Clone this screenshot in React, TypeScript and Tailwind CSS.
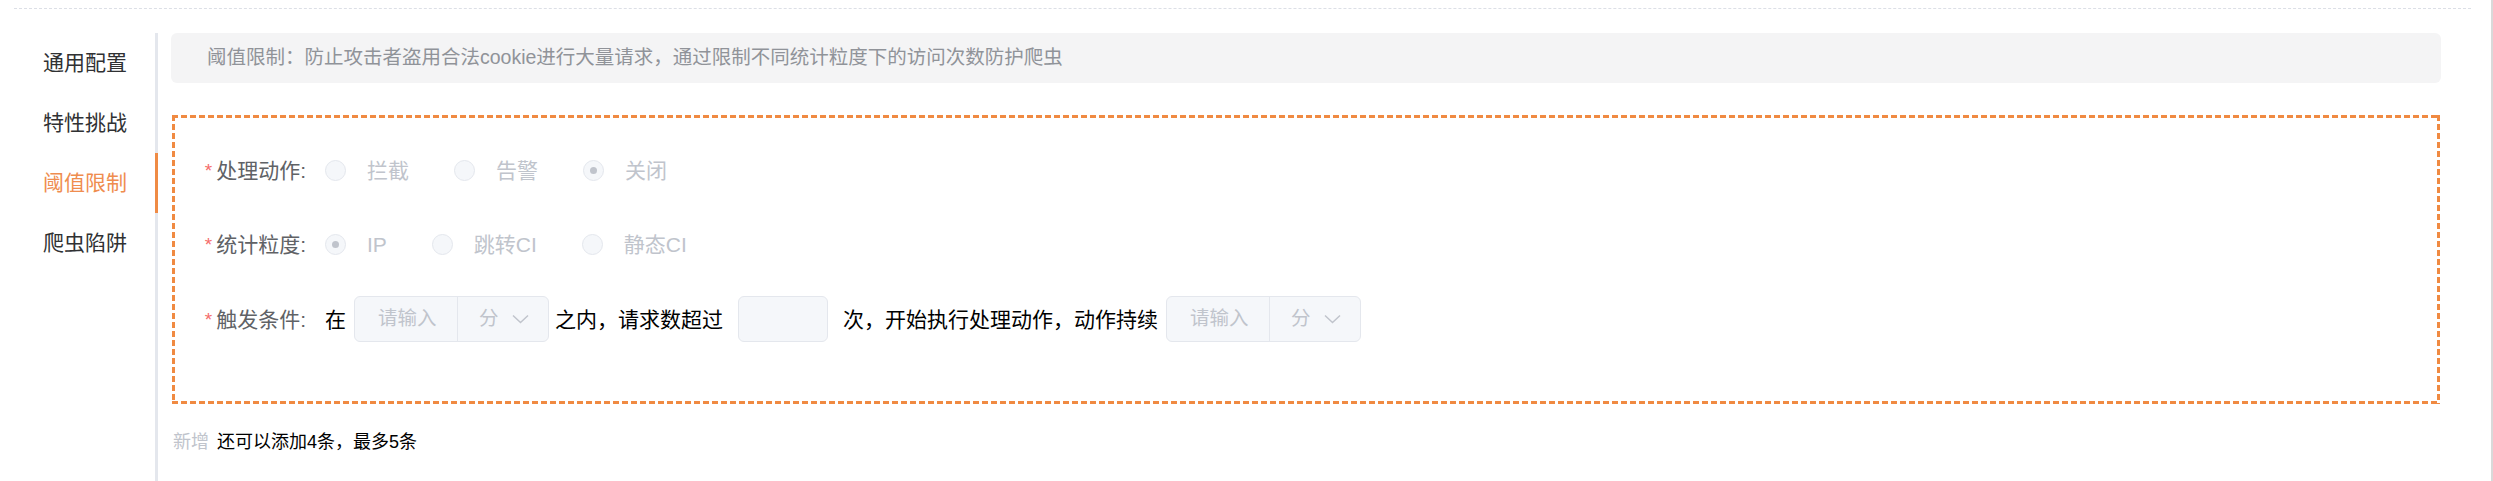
import React from "react";

const FONT = '"Liberation Sans", "Noto Sans CJK SC", sans-serif';

function Radio({ label, checked }: { label: string; checked?: boolean }) {
  return (
    <div className="flex items-center mr-[45px]">
      <div className="w-[21px] h-[21px] rounded-full border border-[#e4e7ed] bg-[#f5f7fa] flex items-center justify-center">
        {checked && <div className="w-[7px] h-[7px] rounded-full bg-[#c0c4cc]" />}
      </div>
      <span className="ml-[21px] text-[21px] leading-[21px] text-[#c0c4cc]">{label}</span>
    </div>
  );
}

function Label({ text }: { text: string }) {
  return (
    <div className="w-[150px] shrink-0 flex items-center justify-end pr-[19px] text-[21px] leading-[21px] text-[#606266]">
      <span className="text-[#f56c6c] mr-[4px] text-[19px]">*</span>
      <span>{text}</span>
    </div>
  );
}

function Chevron() {
  return (
    <svg width="17" height="10" viewBox="0 0 17 10" className="ml-[13px]">
      <path d="M1 1.5 L8.5 8.5 L16 1.5" fill="none" stroke="#c0c4cc" strokeWidth="1.5" />
    </svg>
  );
}

function InputSelect({ className = "" }: { className?: string }) {
  return (
    <div className={"flex h-[46px] w-[195px] border border-[#e4e7ed] bg-[#f5f7fa] rounded-[6px] " + className}>
      <div className="w-[103px] border-r border-[#e4e7ed] flex items-center pl-[23px] text-[19.5px] text-[#c0c4cc]">
        请输入
      </div>
      <div className="flex-1 flex items-center pl-[21px] text-[19.5px] text-[#c0c4cc]">
        分
        <Chevron />
      </div>
    </div>
  );
}

export default function App() {
  const menu = ["通用配置", "特性挑战", "阈值限制", "爬虫陷阱"];
  return (
    <div className="flex h-[481px] w-full bg-white overflow-hidden" style={{ fontFamily: FONT }}>
      <div className="flex-1 flex flex-col">
        <div className="ml-[14px] mr-[20px] pt-[8px]">
          <div className="border-t border-dashed border-[#dcdfe6]" />
        </div>
        <div className="flex flex-1 mt-[24px]">
          <div className="w-[158px] shrink-0 flex flex-col">
            {menu.map((m, i) => (
              <div
                key={m}
                className={
                  "h-[60px] flex items-center justify-end pr-[28px] text-[21px] border-r-[3px] " +
                  (i === 2 ? "border-[#ef8b45] text-[#ef8d4f]" : "border-[#e4e7ed] text-[#303133]")
                }
              >
                {m}
              </div>
            ))}
            <div className="flex-1 border-r-[3px] border-[#e4e7ed]" />
          </div>
          <div className="flex-1 pl-[13px] pr-[50px]">
            <div className="h-[50px] rounded-[6px] bg-[#f4f4f5] flex items-center px-[36px] text-[19.5px] text-[#909399]">
              阈值限制：防止攻击者盗用合法cookie进行大量请求，通过限制不同统计粒度下的访问次数防护爬虫
            </div>
            <div className="mt-[32px] ml-[1px] mr-[1px] h-[289px] p-[3px] [background-image:linear-gradient(to_right,#f08a42_6px,transparent_6px),linear-gradient(to_right,#f08a42_6px,transparent_6px),linear-gradient(to_bottom,#f08a42_6px,transparent_6px),linear-gradient(to_bottom,#f08a42_6px,transparent_6px)] [background-size:9px_3px,9px_3px,3px_9px,3px_9px] [background-position:left_top,left_bottom,left_top,right_top] [background-repeat:repeat-x,repeat-x,repeat-y,repeat-y]">
              <div className="pt-[29px] flex flex-col gap-[28.5px]">
                <div className="flex items-center h-[46px]">
                  <Label text="处理动作:" />
                  <Radio label="拦截" />
                  <Radio label="告警" />
                  <Radio label="关闭" checked />
                </div>
                <div className="flex items-center h-[46px]">
                  <Label text="统计粒度:" />
                  <Radio label="IP" checked />
                  <Radio label="跳转CI" />
                  <Radio label="静态CI" />
                </div>
                <div className="flex items-center h-[46px] text-[21px] text-black">
                  <Label text="触发条件:" />
                  <span className="leading-[21px]">在</span>
                  <InputSelect className="ml-[8px]" />
                  <span className="ml-[6px] leading-[21px]">之内，请求数超过</span>
                  <div className="ml-[15px] w-[90px] h-[46px] border border-[#e4e7ed] bg-[#f5f7fa] rounded-[6px]" />
                  <span className="ml-[15px] leading-[21px]">次，开始执行处理动作，动作持续</span>
                  <InputSelect className="ml-[8px]" />
                </div>
              </div>
            </div>
            <div className="mt-[25px] flex items-center text-[18px] leading-[27px]">
              <span className="text-[#c0c4cc] ml-[2px]">新增</span>
              <span className="ml-[8px] text-black">还可以添加4条，最多5条</span>
            </div>
          </div>
        </div>
      </div>
      <div className="w-[2px] bg-[#d9d9d9]" />
    </div>
  );
}
